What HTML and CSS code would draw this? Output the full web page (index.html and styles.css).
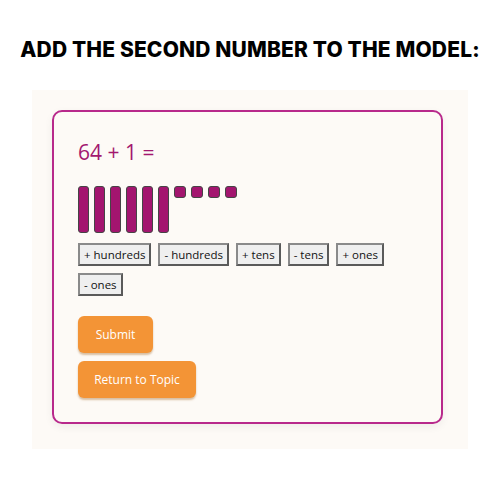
FILE: index.html
```html
<!DOCTYPE html>
<html>
<head>
<meta charset="utf-8">
<link rel="stylesheet" href="styles.css">
</head>
<body>
<h1 class="title">ADD THE SECOND NUMBER TO THE MODEL:</h1>
<div class="panel">
  <div class="card">
    <div class="equation">64 + 1 =</div>
    <div class="model">
      <span class="rod"></span><span class="rod"></span><span class="rod"></span><span class="rod"></span><span class="rod"></span><span class="rod"></span>
      <span class="unit"></span><span class="unit"></span><span class="unit"></span><span class="unit"></span>
    </div>
    <div class="controls">
      <button class="ctl">+ hundreds</button>
      <button class="ctl">- hundreds</button>
      <button class="ctl">+ tens</button>
      <button class="ctl">- tens</button>
      <button class="ctl">+ ones</button>
      <button class="ctl">- ones</button>
    </div>
    <div class="actions">
      <button class="action submit">Submit</button>
      <button class="action back">Return to Topic</button>
    </div>
  </div>
</div>
</body>
</html>
```
FILE: styles.css
```css
html, body {
  margin: 0;
  padding: 0;
  background: #ffffff;
}
body {
  width: 500px;
  height: 500px;
  font-family: "Open Sans", sans-serif;
}
.title {
  margin: 0;
  padding-top: 38px;
  height: 52px;
  box-sizing: border-box;
  text-align: center;
  font-family: Inter, sans-serif;
  font-weight: 800;
  font-size: 21px;
  line-height: 24px;
  color: #000;
  letter-spacing: 0.15px;
}
.panel {
  margin: 38px 32px 0 32px;
  width: 436px;
  height: 359px;
  box-sizing: border-box;
  background: #fdfaf6;
  padding: 20px 25px 0 20px;
}
.card {
  border: 2px solid #b8298b;
  border-radius: 10px;
  height: 314px;
  box-sizing: border-box;
  padding: 26px 24px 0 24px;
  box-shadow: 0 3px 8px rgba(0,0,0,0.06);
}
.equation {
  color: #a3176f;
  font-size: 21px;
  font-weight: 500;
  line-height: 28px;
  height: 28px;
}
.model {
  display: flex;
  align-items: flex-start;
  gap: 5px;
  margin-top: 20px;
  height: 47px;
}
.rod, .unit {
  display: block;
  background: #a3156f;
  border: 1.5px solid #454545;
  box-sizing: border-box;
  border-radius: 3px;
}
.rod { width: 11px; height: 47px; }
.unit { width: 12px; height: 12px; }
.controls {
  display: flex;
  flex-wrap: wrap;
  gap: 7px 7px;
  margin-top: 10px;
  width: 320px;
}
.ctl {
  font-family: "Open Sans", sans-serif;
  font-size: 11.5px;
  height: 23px;
  padding: 0 4px;
  background: #efefef;
  border: 2px solid;
  border-color: #8a8a8a #5a5a5a #5a5a5a #8a8a8a;
  color: #111;
}
.actions {
  display: flex;
  flex-direction: column;
  align-items: flex-start;
  gap: 8px;
  margin-top: 20px;
}
.action {
  height: 37px;
  padding: 0;
  background: #f39436;
  color: #fff;
  border: none;
  border-radius: 6px;
  font-family: "Open Sans", sans-serif;
  font-size: 12px;
  box-shadow: 0 2px 2px rgba(150,80,0,0.35);
}
.submit { width: 75px; }
.back { width: 118px; }
```
